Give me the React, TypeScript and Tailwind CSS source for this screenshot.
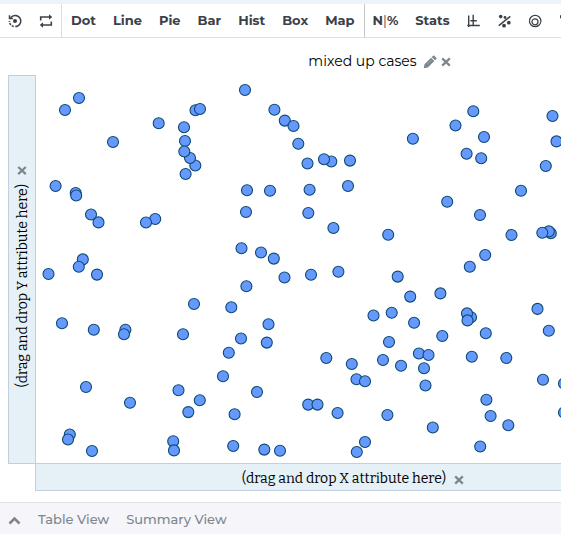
import type { ReactNode } from 'react';

const CHARTS = ['Dot', 'Line', 'Pie', 'Bar', 'Hist', 'Box', 'Map'];

// Centre of every case, in canvas units. Later dots are painted on top.
const DOTS: [number, number][] = [
  [79, 98], [65, 110], [113, 142], [158.7, 123.3], [195.5, 110.3], [200, 109], [245, 90], [184, 127.3],
  [185, 141], [195.3, 165.5], [190, 158], [184.3, 151.5], [185.6, 174], [274.4, 109.8], [284.8, 120.6], [293.5, 126],
  [298.3, 143.8], [307.5, 163.5], [331.3, 161.5], [324, 159.3], [350, 160.6], [348, 186], [247, 190.2], [270, 190.8],
  [309.6, 189.8], [246, 212], [308.3, 213], [333.4, 228], [241.5, 248.2], [261, 252.5], [273.8, 258.6],
  [55.6, 186], [75.7, 193], [76.2, 195.5], [91, 214.5], [98.5, 222.4], [155.2, 219], [146, 222.5],
  [82.8, 259.4], [78.8, 266.8], [48.5, 274], [97, 274.6], [62, 323.2], [93.8, 329.8], [125.4, 329.8], [124, 334.3],
  [86, 387], [130, 402.8], [69.8, 434.5], [68, 439.5], [92, 451],
  [246.4, 286.2], [284.5, 277.5], [311, 274.8], [338.4, 271.8], [194, 304], [231.3, 307.2], [268.5, 324.2],
  [183, 334.2], [241, 338.5], [266.8, 342.6], [228.8, 352.8], [223, 376.2], [178.5, 390.2], [257, 392],
  [199.8, 400.2], [188.3, 412.1], [234.6, 414.2], [173.2, 441.3], [174, 450.4], [233.2, 446], [264.3, 449.6],
  [280, 450.7], [308.2, 404.6], [317.5, 404.6], [337.6, 413], [326.3, 358], [351.8, 364], [356.5, 379.2],
  [365, 381.2], [365, 442], [356.8, 452],
  [473.3, 111.3], [455.5, 125.5], [484, 137], [412.9, 138.8], [466.6, 153.8], [481.2, 158.3], [552.5, 116],
  [556.5, 141.4], [545.8, 166], [521, 190.7], [447.2, 201.8], [480, 215], [388.2, 234.8], [511.5, 235],
  [550.8, 233.3], [548.8, 231.4], [542.3, 232.8], [485.2, 255], [469.8, 266.8],
  [397.7, 276.6], [410.2, 296.6], [440.4, 293.4], [373.5, 315.5], [391.7, 312.7], [414.1, 322.7], [471, 317.3],
  [467, 313.4], [467.5, 320.4], [485.8, 333.2], [442.3, 336], [389, 342], [383, 360], [401, 365.7], [418.9, 353.5],
  [428.5, 355], [424, 368.3], [425.5, 385.5], [387.4, 415], [432.8, 427.5], [471.8, 356.7], [506.3, 358],
  [537.5, 308.9], [548.8, 330.7], [543, 379.7], [564, 383.5], [486.4, 399.8], [490.6, 416], [508.3, 425.3],
  [480.2, 446.5], [564, 412.5],
];

function ToolButton({ label, children }: { label?: string; children: ReactNode }) {
  return (
    <button type="button" aria-label={label} className="flex h-full shrink-0 items-center justify-center">
      {children}
    </button>
  );
}

function RestartIcon() {
  return (
    <svg className="size-[14px]" viewBox="0 0 14 14" fill="none" stroke="currentColor" strokeWidth="1.5">
      <path d="M2.6 3.7A5.6 5.6 0 1 1 7.3 12.6" />
      <path d="M5.8 12.5A5.6 5.6 0 0 1 1.4 7" strokeDasharray="2.2 1.1" />
      <path d="M1.5 1.2v3.3h3.4" />
      <circle cx="7" cy="7" r="2" fill="currentColor" stroke="none" />
    </svg>
  );
}

function SwapIcon() {
  return (
    <svg className="size-[14px]" viewBox="0 0 14 14" fill="none" stroke="currentColor" strokeWidth="1.6">
      <path d="M1.7 6.4V3H11M12.3 7.6V11H3" />
      <path d="M10 .2 13.2 3 10 5.8zM4 8.2.8 11 4 13.8z" fill="currentColor" stroke="none" />
    </svg>
  );
}

function AxesIcon() {
  return (
    <svg className="size-[14px]" viewBox="0 0 14 14" fill="none" stroke="currentColor" strokeWidth="1.4">
      <path d="M1.7 1.5V13M6.2 .8v10.8M.3 11.5h12.5M3.4 6.8h6.4" />
    </svg>
  );
}

function ScatterIcon() {
  return (
    <svg className="size-[14px]" viewBox="0 0 14 14" fill="currentColor">
      <path d="M.8 11.6 12.3 2.4" stroke="currentColor" strokeWidth="1.5" />
      <circle cx="2.7" cy="2.6" r="1.8" />
      <circle cx="7" cy="3.5" r="1.4" />
      <circle cx="6" cy="11.7" r="1.9" />
      <circle cx="10.8" cy="8.7" r="1.9" />
    </svg>
  );
}

function RingIcon() {
  return (
    <svg className="size-[14px]" viewBox="0 0 14 14" fill="none" stroke="currentColor" strokeWidth="1.2">
      <circle cx="6.2" cy="7" r="5.7" />
      <circle cx="6" cy="7.8" r="3" />
    </svg>
  );
}

function CrossIcon() {
  return (
    <svg className="size-[10px]" viewBox="0 0 10 10" fill="none" stroke="currentColor" strokeWidth="2.2">
      <path d="M1.2 1.4 8.8 8.6M8.8 1.4 1.2 8.6" />
    </svg>
  );
}

function PencilIcon() {
  return (
    <svg className="size-[14px]" viewBox="0 0 14 14" fill="currentColor">
      <path d="M.8 13.2 1.5 9.2 8 2.7 11.3 6 4.8 12.5zM8.7 2 10.1.7q.6-.6 1.2 0l2 2q.6.6 0 1.2L12 5.3z" />
      <path d="M4 9.4 8.2 5.2" stroke="#fff" strokeWidth=".3" />
    </svg>
  );
}

function Toolbar() {
  return (
    <header className="flex h-[34px] shrink-0 overflow-hidden border-b border-[#dfdfe2] bg-white text-[13px] font-bold text-[#3c4047]">
      <div className="flex h-full shrink-0 gap-[17px] border-r border-[#dcdde1] px-2">
        <ToolButton label="Restart"><RestartIcon /></ToolButton>
        <ToolButton label="Swap"><SwapIcon /></ToolButton>
      </div>
      <nav className="flex h-full shrink-0 gap-[17px] border-r border-[#c3c6cd] px-[9px]">
        {CHARTS.map((name) => (
          <ToolButton key={name}>{name}</ToolButton>
        ))}
      </nav>
      <div className="flex h-full shrink-0 gap-[17px] px-2">
        <ToolButton label="Counts and percents">
          N<span className="font-normal">|</span>%
        </ToolButton>
        <ToolButton>Stats</ToolButton>
        <ToolButton label="Axes"><AxesIcon /></ToolButton>
        <ToolButton label="Scatter"><ScatterIcon /></ToolButton>
        <ToolButton label="Rings"><RingIcon /></ToolButton>
        <ToolButton label="Filter">
          <svg className="size-[14px]" viewBox="0 0 14 14" fill="none" stroke="currentColor" strokeWidth="1.6">
            <path d="M-.4 2h12.4L7.3 7.5V13l-3-2V7.5z" />
          </svg>
        </ToolButton>
      </div>
    </header>
  );
}

export default function App() {
  return (
    <div className="flex min-h-screen flex-col overflow-hidden bg-white font-['Montserrat','Inter',sans-serif]">
      <div className="h-1 shrink-0 bg-[#edf3fb]" />
      <Toolbar />

      <div className="flex h-[37px] shrink-0 items-center justify-center pt-[10px] pl-[198px] text-[#7c868d]">
        <h1 className="text-[14px] whitespace-nowrap text-black">mixed up cases</h1>
        <button type="button" aria-label="Edit title" className="ml-[6px]"><PencilIcon /></button>
        <button type="button" aria-label="Remove title" className="ml-1"><CrossIcon /></button>
      </div>

      <main className="grid flex-1 grid-cols-[28px_1fr] grid-rows-[1fr_28px] pb-[11px] pl-[8px] font-['Bitter','Liberation_Serif',serif] text-[14px] text-black">
        {/* Y axis drop zone */}
        <div className="-mb-px flex items-center justify-center border border-[#c3cfdc] bg-[#e6f0f7] pt-[14px]">
          <div className="flex rotate-180 items-center gap-2 whitespace-nowrap [writing-mode:vertical-rl]">
            <span>(drag and drop Y attribute here)</span>
            <button type="button" aria-label="Clear Y attribute" className="text-[#7c868d]"><CrossIcon /></button>
          </div>
        </div>

        <svg className="h-full min-h-[388px] w-full overflow-hidden" role="img" aria-label="Dot plot of mixed up cases">
          <g transform="translate(-36 -75)" fill="#6699ff" stroke="#0b4a6f" strokeWidth="1.1">
            {DOTS.map(([x, y], i) => (
              <circle key={i} cx={x} cy={y} r="5.5" />
            ))}
          </g>
        </svg>

        {/* X axis drop zone */}
        <div className="col-start-2 -ml-px flex items-center justify-center gap-2 border border-r-0 border-[#c3cfdc] bg-[#e6f0f7] pt-[2px] pl-[109px] whitespace-nowrap">
          <span>(drag and drop X attribute here)</span>
          <button type="button" aria-label="Clear X attribute" className="pt-1 text-[#7c868d]"><CrossIcon /></button>
        </div>
      </main>

      <footer className="flex h-[33px] shrink-0 items-center border-t border-[#e0e1e6] bg-[#f5f5fa] pt-[2px] pl-2 text-[13px] font-medium text-[#7c868d]">
        <button type="button" aria-label="Expand">
          <svg className="size-[13px]" viewBox="0 0 13 13" fill="none" stroke="currentColor" strokeWidth="2.6">
            <path d="M1.5 9.5 6.5 4.5l5 5" />
          </svg>
        </button>
        <button type="button" className="ml-[17px]">Table View</button>
        <button type="button" className="ml-[17px]">Summary View</button>
      </footer>
    </div>
  );
}
